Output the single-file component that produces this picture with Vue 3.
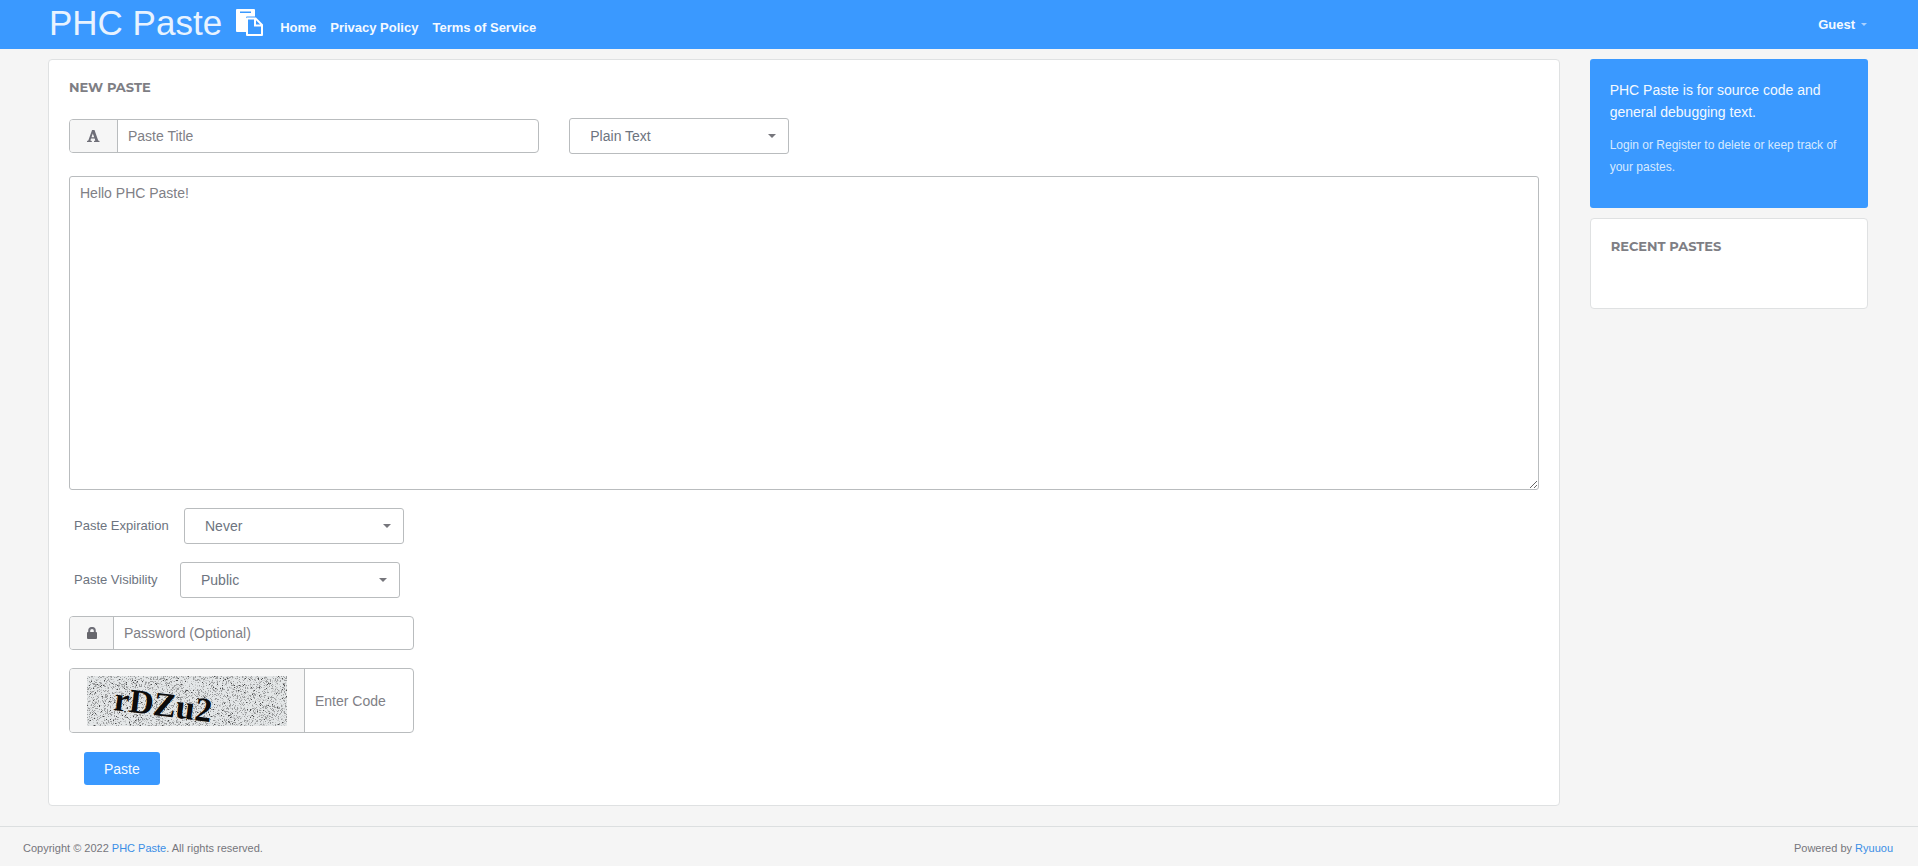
<script setup>
import { ref } from 'vue'

const title = ref('')
const body = ref('')
const format = ref('Plain Text')
const expiration = ref('Never')
const visibility = ref('Public')
const password = ref('')
const code = ref('')

const links = ['Home', 'Privacy Policy', 'Terms of Service']

// Seeded speckles for the captcha background, one path per shade
function speckles(seed, count) {
  let s = seed
  const next = (n) => {
    s = (s * 16807) % 2147483647
    return s % n
  }
  let d = ''
  for (let i = 0; i < count; i++) d += `M${next(200)} ${next(50)}h1v1h-1z`
  return d
}
const noise = [
  { fill: '#cbcdce', d: speckles(4211, 2600) },
  { fill: '#9c9e9f', d: speckles(977, 2000) },
  { fill: '#4a4b4c', d: speckles(31337, 220) },
]
</script>

<template>
  <div class="page">
    <header class="top">
      <a href="#" class="brand">PHC Paste</a>
      <svg class="brand-icon" viewBox="0 0 27 27" aria-hidden="true">
        <path fill="#fff" d="M1 0H18Q19 0 19 1V7.500H11Q10 7.500 10 8.500V23H1Q0 23 0 22V1Q0 0 1 0Z" />
        <path fill="#3a99ff" d="M4 2.500h11v1.500H4z" />
        <path fill="#fff" fill-rule="evenodd" d="M11 8.500H20L27 15.500V26Q27 27 26 27H11Q10 27 10 26V9.500Q10 8.500 11 8.500ZM12 10.500V25H25V17.500H18V10.500ZM20 11.300V15.500H24.200Z" />
      </svg>
      <nav class="links">
        <a v-for="l in links" :key="l" href="#">{{ l }}</a>
      </nav>
      <a href="#" class="guest">Guest <i class="mini-caret"></i></a>
    </header>

    <div class="columns">
      <main class="col-main">
        <form class="card editor" @submit.prevent>
          <h1 class="heading">New Paste</h1>

          <div class="row first">
            <div class="group title-group">
              <label class="addon title-addon" for="title" aria-label="Paste Title">
                <svg width="13" height="12" viewBox="0 0 13 12" aria-hidden="true">
                  <path fill="#6f6f78" fill-rule="evenodd" d="M5 0H7.500L11.200 10.400L12.500 10.900V12H7V10.900L8.300 10.500L7.700 8.600H4L3.400 10.500L4.800 10.900V12H0V10.900L1.300 10.400L4.800 0.800ZM5.800 3.400L4.500 7.300H7.200Z" />
                </svg>
              </label>
              <input id="title" v-model="title" type="text" placeholder="Paste Title" />
            </div>
            <div class="select">
              <select v-model="format" aria-label="Format"><option>Plain Text</option></select>
            </div>
          </div>

          <textarea v-model="body" class="code" aria-label="Paste content" placeholder="Hello PHC Paste!"></textarea>

          <div class="row">
            <label class="field-label expiration" for="expiration">Paste Expiration</label>
            <div class="select">
              <select id="expiration" v-model="expiration"><option>Never</option></select>
            </div>
          </div>

          <div class="row">
            <label class="field-label visibility" for="visibility">Paste Visibility</label>
            <div class="select">
              <select id="visibility" v-model="visibility"><option>Public</option></select>
            </div>
          </div>

          <div class="group narrow">
            <label class="addon lock-addon" for="password" aria-label="Password">
              <svg width="10" height="12" viewBox="0 0 10 12" aria-hidden="true">
                <path fill="none" stroke="#6f6f78" stroke-width="2" d="M2.200 6V3.700a2.800 2.800 0 0 1 5.600 0V6" />
                <rect y="5" width="10" height="7" rx="1" fill="#66666c" />
              </svg>
            </label>
            <input id="password" v-model="password" type="password" placeholder="Password (Optional)" />
          </div>

          <div class="group narrow captcha">
            <label class="addon captcha-addon" for="code">
              <svg class="captcha-image" width="200" height="50" viewBox="0 0 200 50" role="img" aria-label="Captcha">
                <rect width="200" height="50" fill="#e3e6e7" />
                <g shape-rendering="crispEdges">
                  <path v-for="n in noise" :key="n.fill" :fill="n.fill" :d="n.d" />
                </g>
                <text class="captcha-text" x="26" y="34" transform="rotate(7 26 34)">rDZu2</text>
              </svg>
            </label>
            <input id="code" v-model="code" type="text" placeholder="Enter Code" />
          </div>

          <button class="submit" type="submit">Paste</button>
        </form>
      </main>

      <aside class="col-side">
        <section class="notice">
          <p class="lead">PHC Paste is for source code and general debugging text.</p>
          <p class="sub">Login or Register to delete or keep track of your pastes.</p>
        </section>
        <section class="card recent">
          <h2 class="heading">Recent Pastes</h2>
        </section>
      </aside>
    </div>

    <footer class="bottom">
      <span>Copyright © 2022 <a href="#">PHC Paste</a>. All rights reserved.</span>
      <span>Powered by <a href="#">Ryuuou</a></span>
    </footer>
  </div>
</template>

<style>
body {
  background: #f5f5f5;
}
</style>

<style scoped>
.page,
.page * {
  box-sizing: border-box;
}
.page {
  min-height: 100vh;
  display: flex;
  flex-direction: column;
  font-family: "Liberation Sans", Arial, sans-serif;
  font-size: 14px;
  color: #76767c;
  background: #f5f5f5;
}
a {
  text-decoration: none;
  color: inherit;
}
.top {
  display: flex;
  align-items: center;
  height: 49px;
  padding: 0 51px 0 49px;
  background: #3a99ff;
  color: #f4f9ff;
}
.brand {
  font-size: 35px;
  line-height: 40px;
  padding-bottom: 3px;
  color: #e8f3ff;
}
.brand-icon {
  width: 27px;
  height: 27px;
  margin: 0 17px 4px 14px;
}
.links {
  display: flex;
  gap: 14px;
  padding-top: 6px;
  font-size: 13px;
  font-weight: bold;
}
.guest {
  display: flex;
  align-items: center;
  gap: 6px;
  margin-left: auto;
  font-size: 13px;
  font-weight: bold;
}
.mini-caret {
  border: 3px solid transparent;
  border-top-color: #a9d1ff;
  border-bottom: 0;
}
.columns {
  display: flex;
  align-items: flex-start;
  padding: 10px 35px 0 33px;
}
.col-main {
  flex: 0 0 83.3333%;
  padding: 0 15px;
}
.col-side {
  flex: 1;
  padding: 0 15px;
}
.card {
  background: #fff;
  border: 1px solid #dfe1e2;
  border-radius: 4px;
  padding: 20px;
}
.heading {
  margin: 0;
  font-family: Montserrat, Inter, sans-serif;
  font-size: 13px;
  font-weight: 700;
  line-height: 14px;
  text-transform: uppercase;
  color: #7e7e84;
}
.editor .heading {
  margin-bottom: 24px;
}
.row {
  display: flex;
  align-items: center;
  margin-bottom: 18px;
}
.row.first {
  gap: 30px;
  margin-bottom: 22px;
}
.group {
  display: flex;
  height: 34px;
  border: 1px solid #b9bcbe;
  border-radius: 4px;
  overflow: hidden;
  background: #fff;
}
.title-group {
  width: 32%;
}
.narrow {
  width: 345px;
  max-width: 100%;
  margin-bottom: 18px;
}
.captcha {
  height: 65px;
  margin-bottom: 19px;
}
.addon {
  display: flex;
  flex: none;
  align-items: center;
  justify-content: center;
  background: #f6f6f6;
  border-right: 1px solid #b9bcbe;
}
.title-addon {
  width: 48px;
}
.lock-addon {
  width: 44px;
}
.captcha-addon {
  width: 235px;
}
.captcha-image {
  overflow: visible;
}
.captcha-text {
  font-family: "Liberation Serif", serif;
  font-size: 34px;
  font-weight: bold;
  fill: #0c0c0c;
}
input {
  flex: 1;
  min-width: 0;
  padding: 0 10px;
  border: 0;
  outline: 0;
  background: transparent;
  font: inherit;
  color: inherit;
}
input::placeholder,
textarea::placeholder {
  color: #808086;
  opacity: 1;
}
.select {
  position: relative;
  width: 220px;
}
.select::after {
  content: "";
  position: absolute;
  right: 13px;
  top: 16px;
  border: 4px solid transparent;
  border-top-color: #76767c;
  border-bottom: 0;
  pointer-events: none;
}
select {
  appearance: none;
  display: block;
  width: 100%;
  height: 36px;
  padding: 0 20px;
  border: 1px solid #b9bcbe;
  border-radius: 3px;
  background: #fff;
  font: inherit;
  color: #6d7480;
}
.code {
  display: block;
  width: 100%;
  height: 314px;
  margin-bottom: 18px;
  padding: 6px 10px;
  border: 1px solid #b9bcbe;
  border-radius: 3px;
  font: inherit;
  line-height: 20px;
  color: inherit;
  resize: vertical;
}
.field-label {
  padding: 0 0 2px 5px;
  font-size: 13px;
  color: #6d7480;
}
.expiration {
  width: 115px;
}
.visibility {
  width: 111px;
}
.submit {
  display: block;
  height: 33px;
  margin-left: 15px;
  padding: 0 20px;
  border: 0;
  border-radius: 3px;
  background: #3a99ff;
  color: #f4f9ff;
  font: inherit;
}
.notice {
  padding: 20px 20px 30px;
  margin-bottom: 10px;
  border-radius: 3px;
  background: #3a99ff;
  color: #f4f9ff;
  line-height: 22px;
}
.notice p {
  margin: 0;
}
.notice .sub {
  margin-top: 11px;
  font-size: 12px;
  color: #d6e9ff;
}
.recent {
  min-height: 91px;
}
.bottom {
  display: flex;
  justify-content: space-between;
  align-items: center;
  flex: 1;
  margin-top: 20px;
  padding: 2px 25px 0 23px;
  border-top: 1px solid #dcdfe0;
  font-size: 11px;
  min-height: 40px;
}
.bottom a {
  color: #3a8ee6;
}
</style>
